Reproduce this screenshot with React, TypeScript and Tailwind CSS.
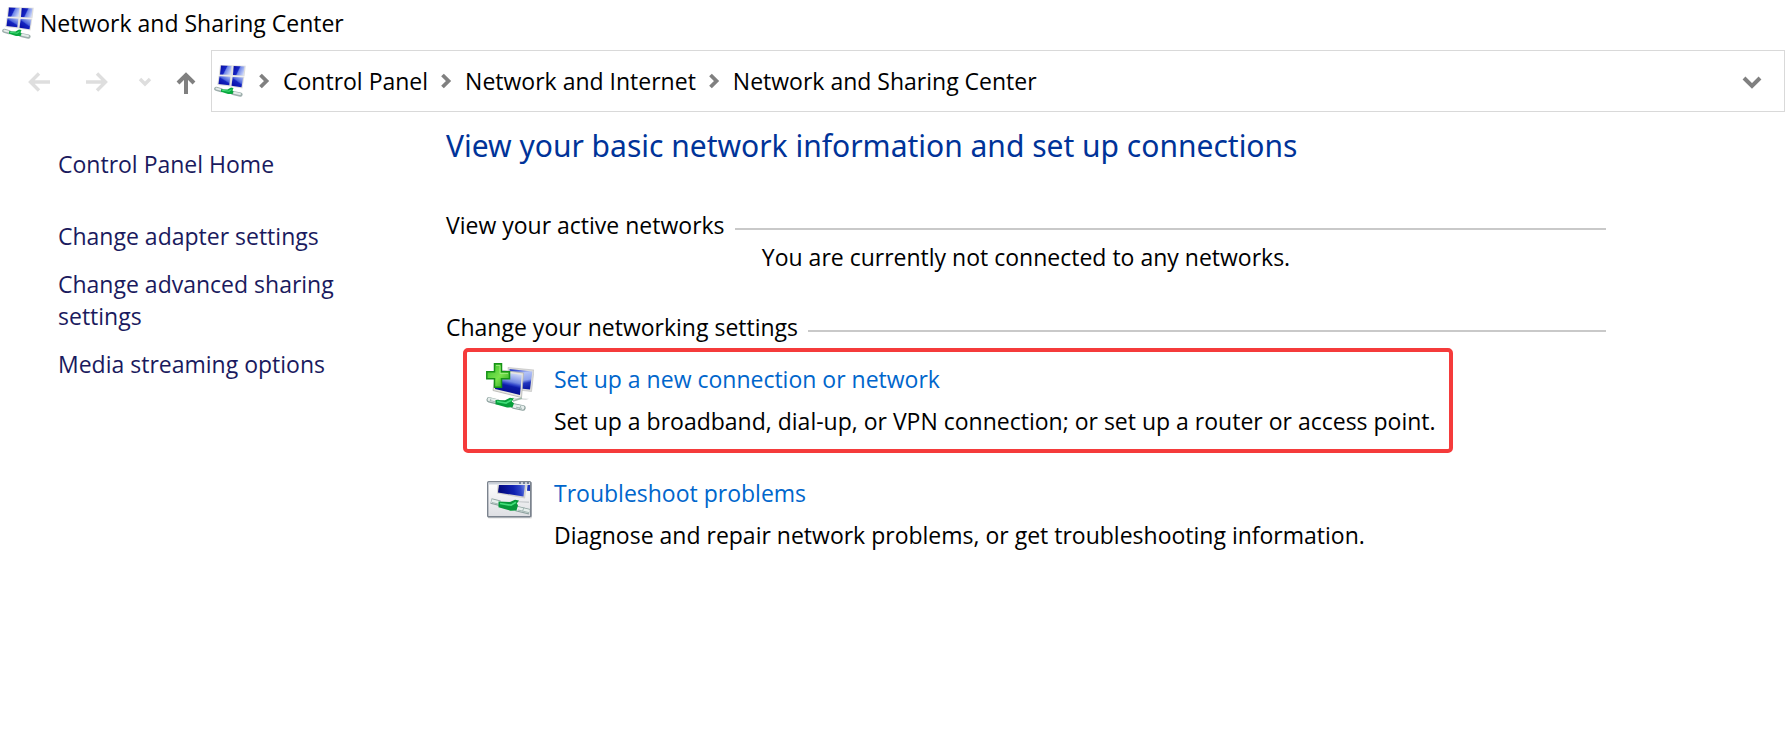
import React from "react";

function NetworkIcon() {
  return (
    <svg className="size-8 shrink-0" viewBox="0 0 32 32" aria-hidden="true">
      <defs>
        <linearGradient id="pane" x1="0" y1="0.3" x2="1" y2="0.7">
          <stop offset="0" stopColor="#0a10a8" />
          <stop offset="0.42" stopColor="#1626c4" />
          <stop offset="0.52" stopColor="#6f86e8" />
          <stop offset="1" stopColor="#d2dcfa" />
        </linearGradient>
        <linearGradient id="paneLow" x1="0.1" y1="1" x2="0.9" y2="0">
          <stop offset="0" stopColor="#0508a0" />
          <stop offset="0.5" stopColor="#1424c0" />
          <stop offset="0.6" stopColor="#4e66dc" />
          <stop offset="1" stopColor="#a9baf3" />
        </linearGradient>
      </defs>
      <path d="M6 0 18.500 .3 17.800 10.800 4.800 10.500Z M18.800 .3 31.800 .8 30.500 11.300 17.800 10.800Z M4.500 11 17.500 11.300 16.300 21.500 3.300 20Z M17.800 11.300 30.300 11.800 28.500 23.500 16.300 21.500Z" fill="#dedede" />
      <path d="M7 .6 17.500 .9 16.700 9.800 6 9.400Z" fill="url(#pane)" />
      <path d="M19.700 .9 30.500 1.400 29.400 10.500 19 10Z" fill="url(#pane)" />
      <path d="M5.500 11.300 16.300 11.700 15.300 20.300 4.500 19Z" fill="url(#paneLow)" />
      <path d="M18.700 11.900 29.200 12.400 27.500 22.300 17.500 20.800Z" fill="url(#paneLow)" />
      <path d="m2.200 23.800 5 1.400M19 28l7.500 1.600" stroke="#9fafad" strokeWidth="4.200" strokeLinecap="round" />
      <path d="m2.500 23.600 4 1M20 27.700l6 1.300" stroke="#e3ebe9" strokeWidth="2" strokeLinecap="round" />
      <path d="m7 24.300 6.500.2 3.500-2 2.500.5-1 2.200 1 1.600-1 2.200-4.500.1-7-2.300Z" fill="#0aa83f" />
      <path d="m8 25.200 7 1 2.500-1.600" fill="none" stroke="#46e07c" strokeWidth="1.100" />
    </svg>
  );
}

function AddConnectionIcon() {
  return (
    <svg className="size-12 shrink-0" viewBox="0 0 48 48" aria-hidden="true">
      <defs>
        <linearGradient id="screen" x1="0.7" y1="0.05" x2="0.45" y2="1">
          <stop offset="0" stopColor="#d3ddfb" />
          <stop offset="0.4" stopColor="#7389e2" />
          <stop offset="0.52" stopColor="#2b3fc8" />
          <stop offset="0.6" stopColor="#0c1ba8" />
          <stop offset="1" stopColor="#040b88" />
        </linearGradient>
        <linearGradient id="rearScreen" x1="0.5" y1="0" x2="0.7" y2="1">
          <stop offset="0" stopColor="#2f45cc" />
          <stop offset="0.2" stopColor="#b4c3f7" />
          <stop offset="0.55" stopColor="#8fa3ee" />
          <stop offset="0.7" stopColor="#2236bf" />
          <stop offset="1" stopColor="#0a17a0" />
        </linearGradient>
        <linearGradient id="plus" x1="0" y1="0" x2="1" y2="1">
          <stop offset="0" stopColor="#35bd2b" />
          <stop offset="0.55" stopColor="#7be34d" />
          <stop offset="1" stopColor="#1d9818" />
        </linearGradient>
      </defs>
      <path d="M22 4.500 48 7 45.500 28.500 24 26Z" fill="#dddddb" stroke="#bababa" strokeWidth="0.600" />
      <path d="M23.500 6 46.300 8.500 44 26.500 25 24.500Z" fill="url(#rearScreen)" />
      <path d="m26 34.500 17 1.200-3 1.300-14-1Z" fill="#dcdede" />
      <path d="M10 6.500 37.500 10 35.500 34.500 7 27.500Z" fill="#e8e7e1" stroke="#b2b2b0" strokeWidth="0.800" />
      <path d="M11.500 8.500 35.800 11.800 34 32 9 26Z" fill="url(#screen)" />
      <path d="M36 35 27 38" stroke="#9fb7ab" strokeWidth="1.800" />
      <path d="m3.200 36.800 8 2M27.500 43l9.500 2" stroke="#8fa3a0" strokeWidth="5.400" strokeLinecap="round" />
      <path d="m3.500 36.500 7 1.700M28 43l8.500 1.700" stroke="#e6eeec" strokeWidth="3.800" strokeLinecap="round" />
      <path d="m4 37.500 6 1.500M30 44.200l6 1.200m-1-3-1.500 3.500M5 35.500 4 38.500" stroke="#a5b8b5" strokeWidth="1" />
      <path d="m9.500 36.900 9.500.4 5-2.500 4 .8-2.300 3 2.300 1.700-1.500 4-5.500.2-11.500-3.200Z" fill="#069e3a" />
      <path d="m11 38.500 9 1.600 5.500-3.200" fill="none" stroke="#3fdc78" strokeWidth="1.700" />
      <path d="M8.500.8h7v8h8v7h-8v8.500h-7v-8.500H.8v-7h7.700Z" fill="url(#plus)" stroke="#169216" strokeWidth="1.500" />
      <path d="M10 2.500h4v8h8" fill="none" stroke="#a6ee85" strokeWidth="0.800" />
    </svg>
  );
}

function TroubleshootIcon() {
  return (
    <svg className="size-12 shrink-0" viewBox="0 2 48 48" aria-hidden="true">
      <defs>
        <linearGradient id="windowFill" x1="0" y1="0" x2="0" y2="1">
          <stop offset="0" stopColor="#ffffff" />
          <stop offset="1" stopColor="#dedfe3" />
        </linearGradient>
        <linearGradient id="monitor" x1="0" y1="0.2" x2="1" y2="0.1">
          <stop offset="0" stopColor="#02077b" />
          <stop offset="0.55" stopColor="#1020b0" />
          <stop offset="0.8" stopColor="#2d43c8" />
          <stop offset="1" stopColor="#6c83e2" />
        </linearGradient>
      </defs>
      <rect x="2" y="7.500" width="44" height="36" rx="1" fill="#dddddd" />
      <rect x="1.700" y="6.700" width="43" height="35" rx="1" fill="url(#windowFill)" stroke="#7b838e" strokeWidth="1.400" />
      <path d="M2.500 7.500h41.500v2H2.500z" fill="#cbd1da" />
      <path d="M33 8h2m2 0h2m2 0h2" stroke="#596885" strokeWidth="1.300" />
      <path d="M11.500 10h29.500l-2 13.500-28-5Z" fill="#d3d2ce" />
      <path d="M13 10h26l-1.500 11.500L12 17.500Z" fill="url(#monitor)" />
      <path d="M41.500 10h2.500v6l-3-.3Z" fill="#2035b8" />
      <path d="M28 26 43 26.500v1.500l-14-1Z" fill="#c9cccf" />
      <path d="m5 26 9 2.200M30 33.500l13.500 3.200" stroke="#8fa3a0" strokeWidth="5.600" />
      <path d="m5.500 26 8 2M30 33.300l13.500 3.200" stroke="#e6eeec" strokeWidth="3.800" />
      <path d="m6 27.500 7 1.700M32 35l11 2.600m-5-5.300-1.500 4" stroke="#a5b8b5" strokeWidth="1" />
      <path d="m12.500 26.500 11.500.4 5-2.200 4 .7-2.200 3 1.200 1.800-1.500 5.300-6 .2-12-3.400Z" fill="#06983a" />
      <path d="m14 28.500 11 1.700 5-3" fill="none" stroke="#42df79" strokeWidth="1.700" />
      <path d="M44.700 7v35" stroke="#7b838e" strokeWidth="1.400" />
    </svg>
  );
}

function Crumb({ children }: { children: React.ReactNode }) {
  return (
    <li className="flex items-center">
      <svg className="mr-[13px] h-4 w-3 shrink-0" viewBox="0 0 12 16" fill="none" stroke="#808080" strokeWidth="3.800" aria-hidden="true">
        <path d="m2.500 2 6 6-6 6" />
      </svg>
      <a href="#" className="whitespace-nowrap">{children}</a>
    </li>
  );
}

function SectionTitle({ children }: { children: React.ReactNode }) {
  return (
    <div className="flex items-center gap-2.5">
      <h2 className="whitespace-nowrap">{children}</h2>
      <div className="mt-2 h-0.5 flex-1 bg-[#c9c9c9]" />
    </div>
  );
}

function Task({ icon, title, text }: { icon: React.ReactNode; title: string; text: string }) {
  return (
    <div className="flex gap-5">
      {icon}
      <div>
        <a href="#" className="text-[#0066cc]">{title}</a>
        <p className="mt-2.5">{text}</p>
      </div>
    </div>
  );
}

export default function App() {
  return (
    <div className="min-h-screen bg-white font-['Open_Sans','Noto_Sans',sans-serif] text-[23px] leading-8 text-black">
      <header>
        <div className="flex h-[50px] items-center gap-1.5 pl-0.5 pb-1">
          <NetworkIcon />
          <span>Network and Sharing Center</span>
        </div>
        <div className="flex h-[62px] items-center pr-px">
          <nav aria-label="History" className="flex h-full w-[211px] shrink-0 items-center pt-0.5">
            <button type="button" aria-label="Back" className="ml-[27px]">
              <svg className="h-6 w-6" viewBox="0 0 24 24" fill="none" stroke="#dedede" strokeWidth="3.400"><path d="M23 12H3m9-8.500L3.500 12l8.500 8.500" /></svg>
            </button>
            <button type="button" aria-label="Forward" className="ml-[34px]">
              <svg className="h-6 w-6" viewBox="0 0 24 24" fill="none" stroke="#dedede" strokeWidth="3.400"><path d="M1 12h20m-9-8.500 8.500 8.500-8.500 8.500" /></svg>
            </button>
            <button type="button" aria-label="Recent locations" className="ml-7">
              <svg className="h-6 w-4" viewBox="0 0 16 24" fill="none" stroke="#dedede" strokeWidth="3.400"><path d="m3 9 5 5 5-5" /></svg>
            </button>
            <button type="button" aria-label="Up" className="ml-[21px]">
              <svg className="h-6 w-6" viewBox="0 0 24 24" fill="none" stroke="#808080" strokeWidth="4"><path d="M12 24V4m-8 9 8-8 8 8" /></svg>
            </button>
          </nav>
          <div className="flex h-full flex-1 items-center border border-[#d9d9d9] pl-0.5 pr-5">
            <NetworkIcon />
            <ol className="ml-3 flex flex-1 items-center gap-3">
              <Crumb>Control Panel</Crumb>
              <Crumb>Network and Internet</Crumb>
              <Crumb>Network and Sharing Center</Crumb>
            </ol>
            <button type="button" aria-label="Previous locations">
              <svg className="h-6 w-6" viewBox="0 0 24 24" fill="none" stroke="#808080" strokeWidth="4"><path d="m4 9 8 8 8-8" /></svg>
            </button>
          </div>
        </div>
      </header>

      <div className="flex">
        <aside className="w-[446px] shrink-0 pt-9 pl-[58px] pr-[100px] text-[#1a1a5e]">
          <a href="#">Control Panel Home</a>
          <ul className="mt-10 flex flex-col gap-4">
            <li><a href="#">Change adapter settings</a></li>
            <li><a href="#">Change advanced sharing settings</a></li>
            <li><a href="#">Media streaming options</a></li>
          </ul>
        </aside>

        <main className="min-w-0 flex-1 pr-[180px] pt-3.5">
          <h1 className="font-['Noto_Sans','Open_Sans',sans-serif] text-[30px] leading-10 text-[#003399]">View your basic network information and set up connections</h1>
          <section className="mt-[43px]">
            <SectionTitle>View your active networks</SectionTitle>
            <p className="text-center">You are currently not connected to any networks.</p>
          </section>
          <section className="mt-[38px]">
            <SectionTitle>Change your networking settings</SectionTitle>
            <div className="mt-[5px] ml-[17px] max-w-[990px] rounded-[5px] border-4 border-[#f53b3b] pt-[11px] pr-2 pb-3 pl-[19px]">
              <Task
                icon={<AddConnectionIcon />}
                title="Set up a new connection or network"
                text="Set up a broadband, dial-up, or VPN connection; or set up a router or access point."
              />
            </div>
            <div className="mt-6 ml-10">
              <Task
                icon={<TroubleshootIcon />}
                title="Troubleshoot problems"
                text="Diagnose and repair network problems, or get troubleshooting information."
              />
            </div>
          </section>
        </main>
      </div>
    </div>
  );
}
